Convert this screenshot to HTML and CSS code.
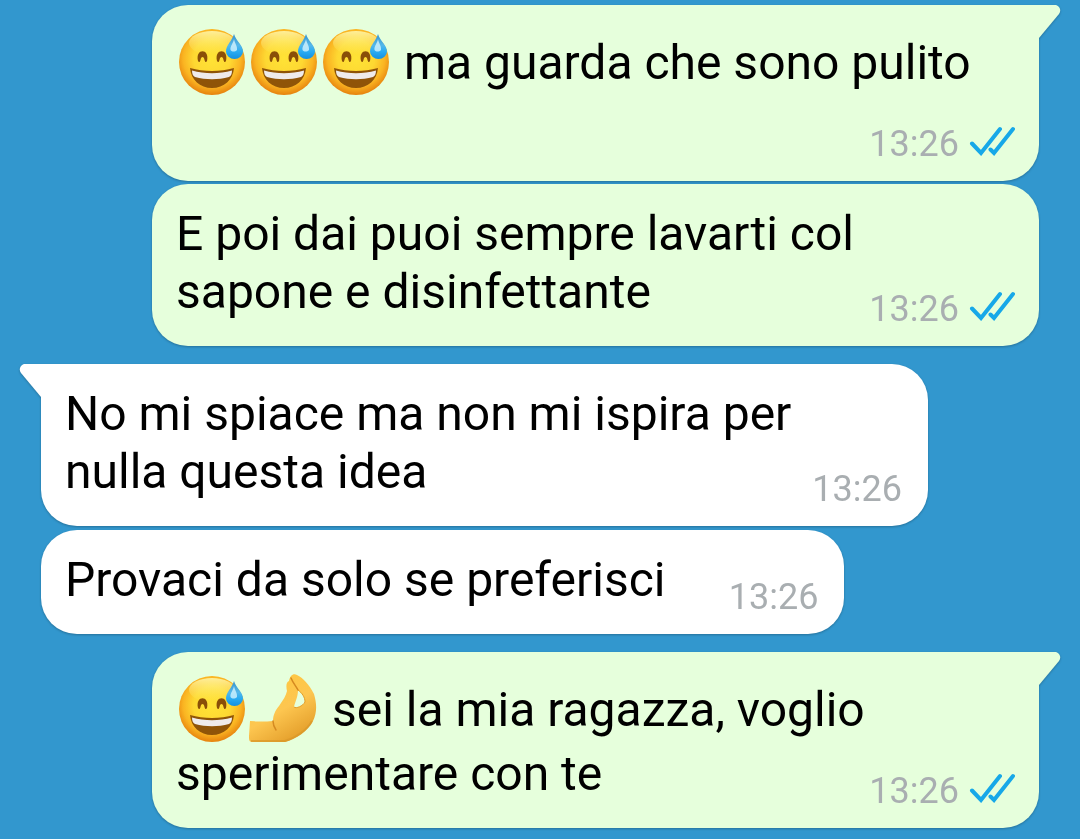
FILE: index.html
```html
<!DOCTYPE html>
<html lang="it">
<head>
    <meta charset="UTF-8">
    <meta name="viewport" content="width=device-width, initial-scale=1.0">
    <title>Chat</title>
    <link rel="stylesheet" href="styles.css">
</head>
<body>
    <!-- shared drawings -->
    <svg class="defs" aria-hidden="true">
        <defs>
            <radialGradient id="skin" cx="0.5" cy="0.44" r="0.56">
                <stop offset="0" stop-color="#ffe336"/>
                <stop offset="0.5" stop-color="#fed832"/>
                <stop offset="0.78" stop-color="#fab422"/>
                <stop offset="1" stop-color="#e6820e"/>
            </radialGradient>
            <linearGradient id="shine" x1="0" y1="0" x2="0" y2="1">
                <stop offset="0" stop-color="#fff8b0" stop-opacity="0.85"/>
                <stop offset="1" stop-color="#fff36a" stop-opacity="0"/>
            </linearGradient>
            <linearGradient id="water" x1="0" y1="0" x2="0" y2="1">
                <stop offset="0" stop-color="#3592cc"/>
                <stop offset="0.45" stop-color="#55b8ea"/>
                <stop offset="0.7" stop-color="#2aacf2"/>
                <stop offset="1" stop-color="#1490e0"/>
            </linearGradient>
            <linearGradient id="palm" x1="0" y1="0" x2="0.6" y2="1">
                <stop offset="0" stop-color="#ffc83a"/>
                <stop offset="0.6" stop-color="#fdc650"/>
                <stop offset="1" stop-color="#e5a02c"/>
            </linearGradient>
        </defs>
        <symbol id="sweat" viewBox="0 0 72 72">
            <circle cx="36" cy="36" r="33" fill="url(#skin)"/>
            <ellipse cx="36" cy="17" rx="23" ry="12" fill="url(#shine)"/>
            <path d="M22 35C19 22 34 22 31 35C30 37 29 36 28.500 34C28 30 25 30 24.500 34C24 36 23 37 22 35ZM41 35C38 22 53 22 50 35C49 37 48 36 47.500 34C47 30 44 30 43.500 34C43 36 42 37 41 35Z" fill="#8a4f08"/>
            <path d="M14 42C28 46 44 46 58 42C57 54 48 62 36 62S15 54 14 42Z" fill="#8f5408"/>
            <path d="M16 44.500C29 48 43 48 56 44.500C56 48 55 50 53 51C42 54 30 54 19 51C17 50 16 48 16 44.500Z" fill="#efebeb"/>
            <path d="M58 8C60 15 67 19 67 25.500A8.500 7.500 0 0 1 50 25.500C50 19 56 15 58 8Z" fill="url(#water)"/>
            <path d="M58 13C59 18 61.500 20 61 24C59 26 56 26 54.500 24C54 20 57 18 58 13Z" fill="#dcf7ff" opacity="0.75"/>
        </symbol>
        <symbol id="pinch" viewBox="0 0 72 72">
            <path fill-rule="evenodd" fill="url(#palm)" d="M2 48Q13 49 25 48C25 42 27 38 31 33C35 27 38 23 39 18C38 14 38 9 41 8C42 3 45 0 49 2C55 5 61 11 66 21C69 31 69 40 65 48C60 58 48 66 37 69H4C1 69 1 66 1 63ZM50 17C50 24 47 29 46 34C48 36 55 33 57 29C57 24 54 20 50 17Z"/>
            <path d="M43 5C45 10 48 13 50 17M25 48C25 52 26 54 28 57" fill="none" stroke="#d58a20" stroke-width="1.500" stroke-linecap="round"/>
            <path d="M3 68H37C48 65 59 57 64 48" fill="none" stroke="#d9972a" stroke-width="2" opacity="0.7"/>
            <path d="M50 17C54 20 57 24 57 29C55 33 48 36 46 34" fill="none" stroke="#e39b25" stroke-width="1"/>
        </symbol>
        <symbol id="read" viewBox="0 0 48 32">
            <path d="M5 19.500L14 29L33 5M23.500 25.500L27 29L46 5" fill="none" stroke="#17a8e8" stroke-width="4" stroke-linecap="round"/>
        </symbol>
        <symbol id="tail" viewBox="0 0 22 36">
            <path d="M0 0H16C20 0 23 5 20 9L0 33Z"/>
        </symbol>
    </svg>

    <main class="chat">
        <section class="group sent">
            <article class="bubble first">
                <svg class="tail" aria-hidden="true"><use href="#tail"/></svg>
                <p class="text"><svg class="emoji" role="img" aria-label="sorriso con goccia"><use href="#sweat"/></svg><svg class="emoji" role="img" aria-label="sorriso con goccia"><use href="#sweat"/></svg><svg class="emoji" role="img" aria-label="sorriso con goccia"><use href="#sweat"/></svg> ma guarda che sono pulito</p>
                <div class="meta"><time>13:26</time><svg class="check" role="img" aria-label="letto"><use href="#read"/></svg></div>
            </article>
            <article class="bubble">
                <p class="text">E poi dai puoi sempre lavarti col sapone e disinfettante</p>
                <div class="meta"><time>13:26</time><svg class="check" role="img" aria-label="letto"><use href="#read"/></svg></div>
            </article>
        </section>

        <section class="group received">
            <article class="bubble first">
                <svg class="tail" aria-hidden="true"><use href="#tail"/></svg>
                <p class="text">No mi spiace ma non mi ispira per nulla questa idea</p>
                <div class="meta"><time>13:26</time></div>
            </article>
            <article class="bubble">
                <p class="text">Provaci da solo se preferisci</p>
                <div class="meta"><time>13:26</time></div>
            </article>
        </section>

        <section class="group sent">
            <article class="bubble first">
                <svg class="tail" aria-hidden="true"><use href="#tail"/></svg>
                <p class="text"><svg class="emoji" role="img" aria-label="sorriso con goccia"><use href="#sweat"/></svg><svg class="emoji" role="img" aria-label="dita a pigna"><use href="#pinch"/></svg> sei la mia ragazza, voglio sperimentare con te</p>
                <div class="meta"><time>13:26</time><svg class="check" role="img" aria-label="letto"><use href="#read"/></svg></div>
            </article>
        </section>
    </main>
</body>
</html>
```
FILE: styles.css
```css
* {
    box-sizing: border-box;
}
body {
    margin: 0;
    background: #3297ce;
    font-family: Roboto, "Liberation Sans", sans-serif;
    color: #000;
}
.defs {
    position: absolute;
    width: 0;
    height: 0;
}
.chat {
    display: flex;
    flex-direction: column;
    gap: 18px;
    padding: 5px 41px 11px;
}
.group {
    display: flex;
    flex-direction: column;
    align-items: flex-start;
    gap: 3px;
}
.received {
    gap: 4px;
}
.sent {
    align-items: flex-end;
}
.bubble {
    position: relative;
    max-width: calc(100% - 111px);
    padding: 21px 26px 25px 24px;
    border-radius: 36px;
    background: #fff;
    filter: drop-shadow(0 1px 1px rgba(0, 0, 0, 0.25));
}
.sent .bubble {
    background: #e6ffdc;
}
.sent .first {
    border-top-right-radius: 0;
}
.received .first {
    border-top-left-radius: 0;
}
.text {
    margin: 0;
    font-size: 48px;
    line-height: 58px;
}
/* keeps room for the time on the last line */
.text::after {
    content: "";
    display: inline-block;
    width: 153px;
}
.emoji {
    width: 72px;
    height: 72px;
    vertical-align: -19px;
}
.meta {
    position: absolute;
    right: 24px;
    bottom: 16px;
    display: flex;
    align-items: baseline;
    gap: 8px;
    font-size: 36px;
    line-height: 42px;
    color: #a9aeb1;
}
.received .meta {
    right: 26px;
}
.check {
    width: 48px;
    height: 32px;
}
.tail {
    position: absolute;
    top: 0;
    left: 100%;
    width: 22px;
    height: 36px;
    fill: #e6ffdc;
}
/* mirrored on the other side */
.received .tail {
    left: auto;
    right: 100%;
    fill: #fff;
    transform: scaleX(-1);
}
```
